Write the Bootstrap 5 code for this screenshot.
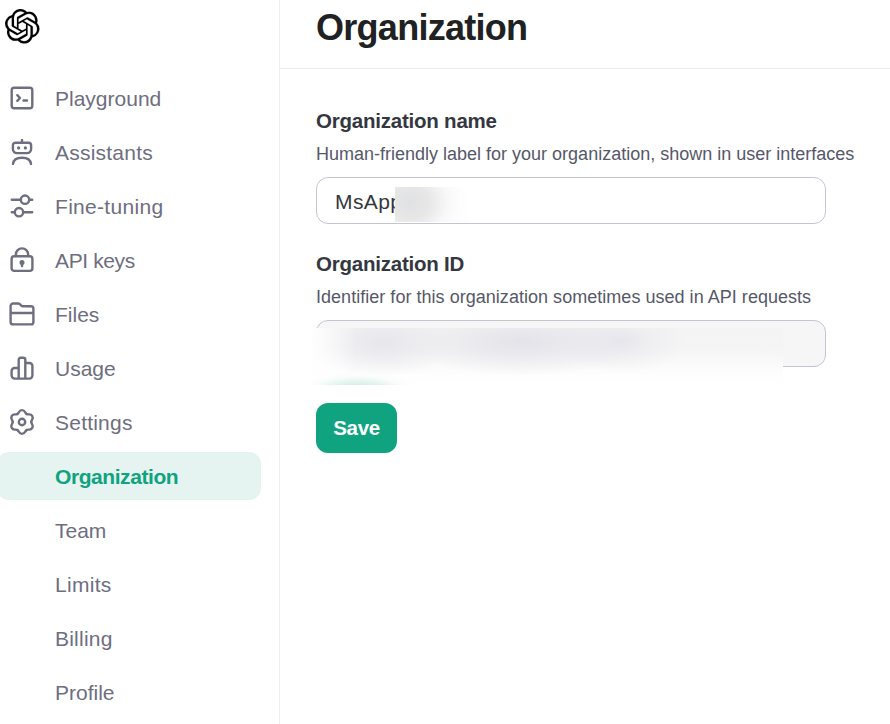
<!DOCTYPE html>
<html lang="en">
<head>
<meta charset="utf-8">
<meta name="viewport" content="width=device-width, initial-scale=1">
<title>Organization</title>
<link rel="stylesheet" href="https://cdn.jsdelivr.net/npm/bootstrap@5.3.0/dist/css/bootstrap.min.css">
<style>
body{font-family:"Liberation Sans",Arial,sans-serif;height:724px;overflow:hidden;background:#fff;color:#353740}
.side{width:280px;height:724px;border-right:1px solid #ececf1}
.logo{padding:9px 0 0 5px;height:74px}
.side .nav{gap:6px}
.side .nav-link{height:48px;width:261px;padding:0 0 0 9px;font-size:21px;line-height:50px;color:#6e6e80;border-radius:0}
.side .nav-link svg{width:26px;height:26px;margin-right:20px;flex:none}
.side .nav-link span{padding-top:2px}
.side .sub{padding-left:55px}
.side .nav-link.active{background:#e5f3f1;color:#10a37f;font-weight:700;width:264px;margin-left:-3px;padding-left:58px;border-radius:12px;letter-spacing:-.43px}
.wide-a{letter-spacing:.22px}
.wide-b{letter-spacing:.3px}
.tight{letter-spacing:-.38px}
.ic{fill:none;stroke:#6e6e80;stroke-width:2.4;stroke-linecap:round;stroke-linejoin:round}
.top-bar{height:69px;border-bottom:1px solid #ececf1;padding-left:36px}
.top-bar h1{font-size:36px;line-height:56px;font-weight:700;color:#202123;letter-spacing:-.72px}
.main-form{padding:38px 0 0 36px}
.main-form .form-label{font-size:20.5px;line-height:28px;font-weight:700;letter-spacing:-.22px}
.hint{font-size:18px;line-height:26px;color:#565869;margin:6px 0 10px}
.hint-b{letter-spacing:.03px}
.main-form .form-control{width:510px;height:47px;border:1px solid #c5c5d2;border-radius:12px;font-size:21px;color:#353740;padding:2px 18px 0;letter-spacing:.4px}
.main-form .form-control:disabled{background:#f6f6f7}
.field{width:510px}
.second-label{margin-top:26px}
.smear-name{left:79px;top:10px;width:90px;height:35px;background:radial-gradient(ellipse 50px 46px at 15px 15px,#e0e1e2 0%,#e7e7e8 38%,rgba(247,247,248,.7) 75%,rgba(255,255,255,0) 100%),linear-gradient(90deg,#f3f3f3 0,#fff 75px)}
.smear-id{left:-5px;top:8px;width:472px;height:57px;background:
radial-gradient(ellipse 62px 18px at 47px 62px,#bfe5da 0,rgba(205,235,227,.65) 40%,rgba(240,250,247,.3) 75%,rgba(255,255,255,0) 100%),
linear-gradient(90deg,rgba(255,255,255,.9) 0,rgba(255,255,255,0) 45px),
radial-gradient(ellipse 72px 34px at 73px 14px,#e7e6eb 0,rgba(232,231,237,.65) 42%,rgba(242,242,244,0) 100%),
radial-gradient(ellipse 120px 34px at 211px 14px,#e4e3e9 0,rgba(230,229,235,.65) 45%,rgba(242,242,244,0) 100%),
radial-gradient(ellipse 66px 32px at 309px 13px,#e7e6ec 0,rgba(234,233,238,.6) 42%,rgba(243,243,245,0) 100%),
linear-gradient(180deg,#f4f4f4 0,#f5f5f5 22px,#fafafa 36px,#fefefe 48px,#fff 57px)}
.btn-save{width:81px;height:50px;border-radius:12px;background:#10a37f;color:#fff;font-size:20.5px;font-weight:700;padding:0;margin-top:36px;letter-spacing:-.3px}
.btn-save:hover{background:#0e906f;color:#fff}
</style>
</head>
<body>
<div class="d-flex">
<aside class="side flex-shrink-0">
<div class="logo"><svg class="d-block" width="34.5" height="34.5" viewBox="0 0 24 24" fill="#000" stroke="#000" stroke-width=".1"><path d="M22.2819 9.8211a5.9847 5.9847 0 0 0-.5157-4.9108 6.0462 6.0462 0 0 0-6.5098-2.9A6.0651 6.0651 0 0 0 4.9807 4.1818a5.9847 5.9847 0 0 0-3.9977 2.9 6.0462 6.0462 0 0 0 .7427 7.0966 5.98 5.98 0 0 0 .511 4.9107 6.051 6.051 0 0 0 6.5146 2.9001A5.9847 5.9847 0 0 0 13.2599 24a6.0557 6.0557 0 0 0 5.7718-4.2058 5.9894 5.9894 0 0 0 3.9977-2.9001 6.0557 6.0557 0 0 0-.7475-7.0729zm-9.022 12.6081a4.4755 4.4755 0 0 1-2.8764-1.0408l.1419-.0804 4.7783-2.7582a.7948.7948 0 0 0 .3927-.6813v-6.7369l2.02 1.1686a.071.071 0 0 1 .038.052v5.5826a4.504 4.504 0 0 1-4.4945 4.4944zm-9.6607-4.1254a4.4708 4.4708 0 0 1-.5346-3.0137l.142.0852 4.783 2.7582a.7712.7712 0 0 0 .7806 0l5.8428-3.3685v2.3324a.0804.0804 0 0 1-.0332.0615L9.74 19.9502a4.4992 4.4992 0 0 1-6.1408-1.6464zM2.3408 7.8956a4.485 4.485 0 0 1 2.3655-1.9728V11.6a.7664.7664 0 0 0 .3879.6765l5.8144 3.3543-2.0201 1.1685a.0757.0757 0 0 1-.071 0l-4.8303-2.7865A4.504 4.504 0 0 1 2.3408 7.8956zm16.5963 3.8558L13.1038 8.364 15.1192 7.2a.0757.0757 0 0 1 .071 0l4.8303 2.7913a4.4944 4.4944 0 0 1-.6765 8.1042v-5.6772a.79.79 0 0 0-.407-.667zm2.0107-3.0231l-.142-.0852-4.7735-2.7818a.7759.7759 0 0 0-.7854 0L9.409 9.2297V6.8974a.0662.0662 0 0 1 .0284-.0615l4.8303-2.7866a4.4992 4.4992 0 0 1 6.6802 4.66zM8.3065 12.863l-2.02-1.1638a.0804.0804 0 0 1-.038-.0567V6.0742a4.4992 4.4992 0 0 1 7.3757-3.4537l-.142.0805L8.704 5.459a.7948.7948 0 0 0-.3927.6813zm1.0976-2.3654l2.602-1.4998 2.6069 1.4998v2.9994l-2.5974 1.4997-2.6067-1.4997Z"/></svg></div>
<nav class="nav flex-column">
<a class="nav-link d-flex align-items-center" href="#"><svg class="ic" viewBox="0 0 26 26"><rect x="2.700" y="2.700" width="20.600" height="20.600" rx="2.500"/><path d="M8.300 10.200l2.700 2.800-2.700 2.800M14.500 15.500h3.500"/></svg><span>Playground</span></a>
<a class="nav-link d-flex align-items-center" href="#"><svg class="ic" viewBox="0 0 26 26"><path d="M13 1v2M6.500 3.700h13a2.600 2.600 0 0 1 2.600 2.600v3.800a4 4 0 0 1-4 4H7.900a4 4 0 0 1-4-4V6.300a2.600 2.600 0 0 1 2.600-2.600zM4 25c.4-4 3.500-6.300 9-6.300s8.600 2.300 9 6.300"/><g fill="#6e6e80" stroke="none"><circle cx="9.600" cy="8.900" r="1.650"/><circle cx="16.400" cy="8.900" r="1.650"/></g></svg><span class="wide-a">Assistants</span></a>
<a class="nav-link d-flex align-items-center" href="#"><svg class="ic" viewBox="0 0 26 26"><path d="M2.800 6.700h9M20.300 6.700h2.900M2.800 19.200h3M14.300 19.200h8.900"/><circle cx="16" cy="6.700" r="4.200"/><circle cx="10" cy="19.200" r="4.200"/></svg><span class="wide-b">Fine-tuning</span></a>
<a class="nav-link d-flex align-items-center" href="#"><svg class="ic" viewBox="0 0 26 26"><rect x="2.600" y="9.300" width="20.800" height="14.600" rx="2.600"/><path d="M6.900 9V7.500a6.100 6.100 0 0 1 12.200 0V9M13 16v3"/><circle cx="13" cy="15.500" r="1.300" fill="#6e6e80"/></svg><span class="tight">API keys</span></a>
<a class="nav-link d-flex align-items-center" href="#"><svg class="ic" viewBox="0 0 26 26"><path d="M1.600 20.900V5a2.500 2.500 0 0 1 2.500-2.500h5.200c2.300 0 2 2.700 4.400 2.700h8.200a2.500 2.500 0 0 1 2.500 2.500v13.200a2.500 2.500 0 0 1-2.500 2.500H4.100a2.500 2.500 0 0 1-2.500-2.500zM1.600 12h22.800"/></svg><span>Files</span></a>
<a class="nav-link d-flex align-items-center" href="#"><svg class="ic" viewBox="0 0 26 26"><path d="M9.700 23.600V4.700a2 2 0 0 1 2-2h2.600a2 2 0 0 1 2 2v18.900M9.700 13H5.600a3 3 0 0 0-3 3v4.600a3 3 0 0 0 3 3h14.800a3 3 0 0 0 3-3V11a3 3 0 0 0-3-3h-4.100"/></svg><span>Usage</span></a>
<a class="nav-link d-flex align-items-center" href="#"><svg class="ic" viewBox="0 0 26 26" overflow="visible"><defs><path id="tooth" d="M-4.650-8.050C-2.700-8.900-3.400-11.900 0-11.900S2.700-8.900 4.650-8.050"/></defs><g transform="translate(13 13)"><use href="#tooth"/><use href="#tooth" transform="rotate(60)"/><use href="#tooth" transform="rotate(120)"/><use href="#tooth" transform="rotate(180)"/><use href="#tooth" transform="rotate(240)"/><use href="#tooth" transform="rotate(300)"/><circle r="3.200"/></g></svg><span class="wide-a">Settings</span></a>
<a class="nav-link sub active" href="#">Organization</a>
<a class="nav-link sub" href="#">Team</a>
<a class="nav-link sub wide-b" href="#">Limits</a>
<a class="nav-link sub wide-a" href="#">Billing</a>
<a class="nav-link sub" href="#">Profile</a>
</nav>
</aside>
<main class="flex-grow-1">
<header class="top-bar"><h1 class="m-0">Organization</h1></header>
<form class="main-form">
<label class="form-label d-block m-0" for="org-name">Organization name</label>
<div class="hint text-nowrap"><span class="hint-a">Human-friendly label for your organization, shown in user interfaces</span></div>
<div class="field position-relative"><input id="org-name" class="form-control" value="MsApp"><div class="smear-name position-absolute"></div></div>
<label class="form-label second-label d-block mb-0" for="org-id">Organization ID</label>
<div class="hint text-nowrap"><span class="hint-b">Identifier for this organization sometimes used in API requests</span></div>
<div class="field position-relative"><input id="org-id" class="form-control" disabled><div class="smear-id position-absolute"></div></div>
<button type="button" class="btn btn-save">Save</button>
</form>
</main>
</div>
<script src="https://cdn.jsdelivr.net/npm/bootstrap@5.3.0/dist/js/bootstrap.bundle.min.js"></script>
</body>
</html>
